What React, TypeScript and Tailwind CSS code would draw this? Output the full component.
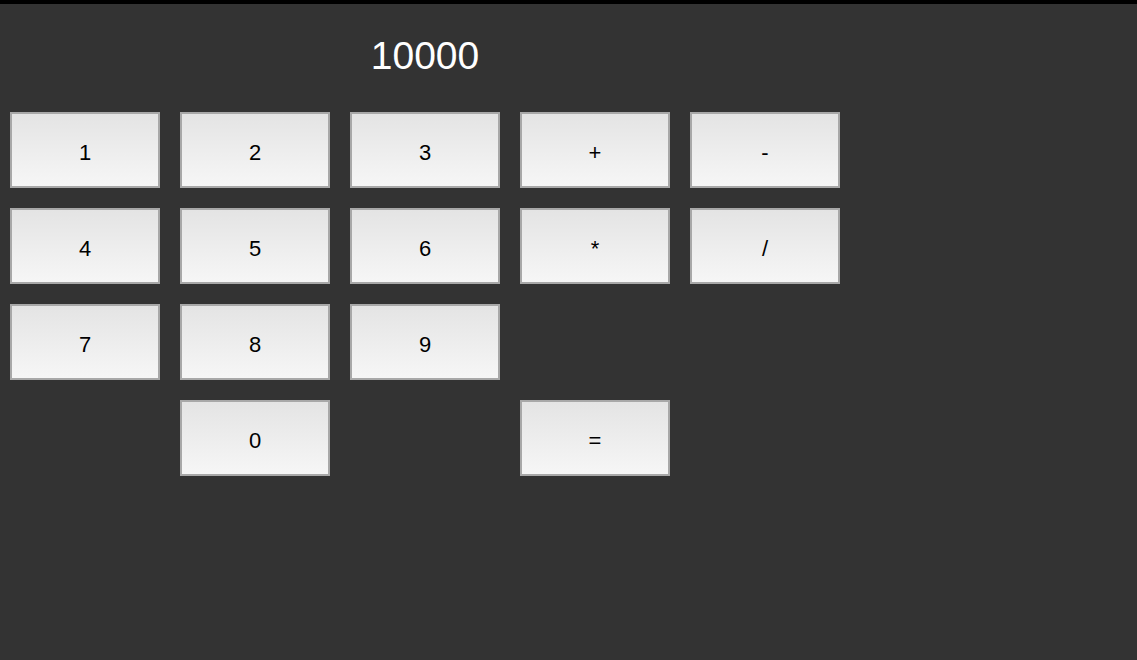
import React from 'react';

const keys: (string | null)[] = [
  '1', '2', '3', '+', '-',
  '4', '5', '6', '*', '/',
  '7', '8', '9', null, null,
  null, '0', null, '=', null,
];

export default function App() {
  return (
    <div className="min-h-[660px] bg-[#333333] font-['Liberation_Sans',Arial,sans-serif]">
      {/* top strip */}
      <div className="h-[4px] bg-black" />
      <div className="w-[840px] pl-[10px]">
        <div className="flex h-[102px] items-center justify-center text-[39px] text-white mb-[6px] pt-[2px]">
          10000
        </div>
        <div className="grid grid-cols-[repeat(5,150px)] auto-rows-[76px] gap-[20px]">
          {keys.map((k, i) =>
            k === null ? (
              <div key={i} />
            ) : (
              <button
                key={i}
                className="flex items-center justify-center border-2 border-[#a8a8a8] bg-gradient-to-b from-[#e4e4e4] to-[#f6f6f6] pt-[4px] text-[22px] text-black"
              >
                {k}
              </button>
            )
          )}
        </div>
      </div>
    </div>
  );
}
